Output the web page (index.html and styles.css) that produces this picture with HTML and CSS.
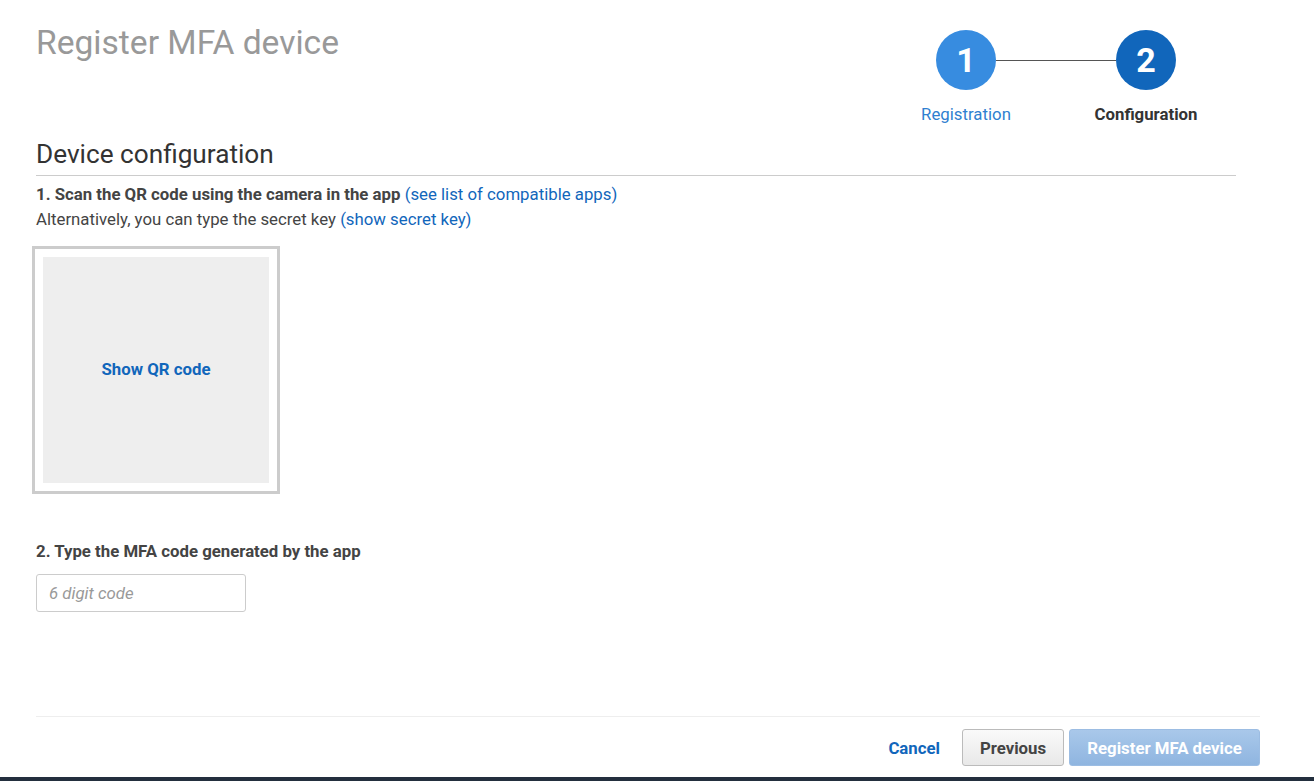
FILE: index.html
```html
<!DOCTYPE html>
<html lang="en">
<head>
    <meta charset="UTF-8">
    <meta name="viewport" content="width=device-width, initial-scale=1.0">
    <title>Register MFA device</title>
    <link rel="stylesheet" href="styles.css">
</head>
<body>

    <div class="page">
        <div class="header">
            <h1 class="title">Register MFA device</h1>

            <div class="steps">
                <div class="step-row">
                    <div class="circle done">1</div>
                    <div class="connector"></div>
                    <div class="circle current">2</div>
                </div>
                <div class="step-row labels">
                    <div class="label"><a href="#" class="label-link">Registration</a></div>
                    <div class="label-gap"></div>
                    <div class="label active">Configuration</div>
                </div>
            </div>
        </div>

        <h2 class="section-title">Device configuration</h2>

        <p class="line"><strong>1. Scan the QR code using the camera in the app</strong> <a href="#">(see list of compatible apps)</a></p>
        <p class="line">Alternatively, you can type the secret key <a href="#">(show secret key)</a></p>

        <div class="qr-box">
            <div class="qr-inner">
                <a href="#" class="qr-link">Show QR code</a>
            </div>
        </div>

        <p class="line step-two"><strong>2. Type the MFA code generated by the app</strong></p>
        <input type="text" class="code-input" placeholder="6 digit code">

        <div class="footer">
            <a href="#" class="cancel">Cancel</a>
            <button class="btn btn-secondary">Previous</button>
            <button class="btn btn-primary" disabled>Register MFA device</button>
        </div>
    </div>

    <div class="bottom-bar"></div>

</body>
</html>
```

FILE: styles.css
```css
body {
    font-family: Roboto, 'Liberation Sans', Arial, sans-serif;
    background-color: #fff;
    color: #444;
    margin: 0;
    padding: 0;
}
a {
    color: #1166bb;
    text-decoration: none;
}
.page {
    padding: 0 54px 0 36px;
}
.header {
    display: flex;
    justify-content: space-between;
    align-items: flex-start;
}
.title {
    margin: 24px 0 0;
    font-size: 33.6px;
    line-height: 38px;
    font-weight: 400;
    color: #999;
}
.steps {
    margin: 30px 84px 0 0;
}
.step-row {
    display: flex;
    align-items: center;
}
.circle {
    width: 60px;
    height: 60px;
    border-radius: 50%;
    display: flex;
    justify-content: center;
    align-items: center;
    color: #fff;
    font-size: 34px;
    font-weight: 700;
}
.circle.done {
    background-color: #378ce0;
}
.circle.current {
    background-color: #1166bb;
}
.connector {
    width: 120px;
    height: 1px;
    background-color: #555;
}
.labels {
    margin-top: 14px;
}
.label {
    width: 60px;
    display: flex;
    justify-content: center;
    white-space: nowrap;
    font-size: 16.8px;
    line-height: 21px;
}
.label-gap {
    width: 120px;
}
.label-link {
    color: #2f7fd0;
}
.label.active {
    font-weight: 700;
    color: #333;
}
.section-title {
    margin: 14px 0 0;
    max-width: 1200px;
    font-size: 26.2px;
    line-height: 30px;
    font-weight: 400;
    color: #333;
    padding-bottom: 6px;
    border-bottom: 1px solid #ccc;
}
.line {
    margin: 0;
    font-size: 16.8px;
    line-height: 25px;
}
.section-title + .line {
    margin-top: 6px;
}
.line strong {
    color: #444;
}
.qr-box {
    width: 226px;
    height: 226px;
    margin: 14px 0 0 -4px;
    padding: 8px;
    border: 3px solid #ccc;
}
.qr-inner {
    width: 100%;
    height: 100%;
    background-color: #eee;
    display: flex;
    justify-content: center;
    align-items: center;
    padding-bottom: 3px;
    box-sizing: border-box;
}
.qr-link {
    font-weight: 700;
    font-size: 16.8px;
}
.step-two {
    margin-top: 45px;
    line-height: 24px;
}
.code-input {
    display: block;
    margin-top: 11px;
    width: 210px;
    height: 38px;
    box-sizing: border-box;
    padding: 0 12px;
    border: 1px solid #ccc;
    border-radius: 3px;
    font-family: Roboto, 'Liberation Sans', Arial, sans-serif;
    font-size: 16.8px;
    color: #444;
}
.code-input::placeholder {
    color: #999;
    font-style: italic;
}
.footer {
    margin-top: 104px;
    border-top: 1px solid #eee;
    padding-top: 12px;
    display: flex;
    justify-content: flex-end;
    align-items: center;
}
.cancel {
    font-weight: 700;
    font-size: 16.8px;
    margin-right: 22px;
}
.btn {
    height: 37px;
    box-sizing: border-box;
    padding: 0 10px;
    border-radius: 3px;
    font-family: Roboto, 'Liberation Sans', Arial, sans-serif;
    font-size: 16.8px;
    font-weight: 700;
    cursor: pointer;
}
.btn-secondary {
    background: linear-gradient(#fafafa, #e8e8e8);
    border: 1px solid #bbb;
    color: #444;
    width: 102px;
}
.btn-primary {
    margin-left: 5px;
    width: 191px;
    background: linear-gradient(#a9c8ea, #8fb5e0);
    border: 1px solid #9cbde3;
    color: #fff;
    cursor: default;
}
.bottom-bar {
    margin-top: 11px;
    height: 4px;
    background-color: #232f3e;
}
```
